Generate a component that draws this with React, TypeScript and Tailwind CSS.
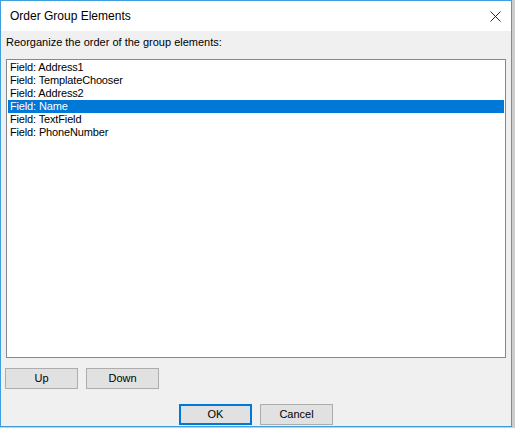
const items = [
  "Field: Address1",
  "Field: TemplateChooser",
  "Field: Address2",
  "Field: Name",
  "Field: TextField",
  "Field: PhoneNumber",
];

const selected = 3;

function WinButton({ label, primary }: { label: string; primary?: boolean }) {
  return (
    <button
      className={
        "h-[21px] w-[73px] bg-[#e1e1e1] text-[11px] leading-none text-black flex items-center justify-center " +
        (primary ? "border-2 border-[#0078d7]" : "border border-[#adadad]")
      }
    >
      {label}
    </button>
  );
}

export default function App() {
  return (
    <div
      className="w-[515px] h-[428px] bg-[#cdcdcd] overflow-hidden"
      style={{ fontFamily: '"Liberation Sans", Arial, sans-serif' }}
    >
      <div className="w-[512px] h-[427px] border border-[#3f9fdc] flex flex-col">
        {/* Title bar */}
        <div className="h-[30px] bg-white flex items-center justify-between pl-[9px] pr-[10px]">
          <span className="text-[12px] text-black">Order Group Elements</span>
          <svg width="11" height="11" viewBox="0 0 11 11" className="mt-[1px]">
            <path d="M0.5 0.5 L10.5 10.5 M10.5 0.5 L0.5 10.5" stroke="#111" strokeWidth="0.9" fill="none" />
          </svg>
        </div>

        {/* Body */}
        <div className="flex-1 bg-[#f0f0f0] flex flex-col">
          <div className="pt-[5px] pl-[5px] text-[11px] leading-[13px] text-black">
            Reorganize the order of the group elements:
          </div>

          <div className="mt-[10px] ml-[5px] w-[500px] h-[299px] bg-white border border-[#828790] p-px">
            {items.map((item, i) => (
              <div
                key={item}
                className={
                  "h-[13px] pl-[2px] text-[11px] leading-[13px] tracking-[-0.15px] " +
                  (i === selected ? "bg-[#0078d7] text-white" : "text-black")
                }
              >
                {item}
              </div>
            ))}
          </div>

          <div className="mt-[10px] ml-[4px] flex gap-[8px]">
            <WinButton label="Up" />
            <WinButton label="Down" />
          </div>

          <div className="mt-[15px] ml-[178px] flex gap-[8px]">
            <WinButton label="OK" primary />
            <WinButton label="Cancel" />
          </div>
        </div>
      </div>
    </div>
  );
}
